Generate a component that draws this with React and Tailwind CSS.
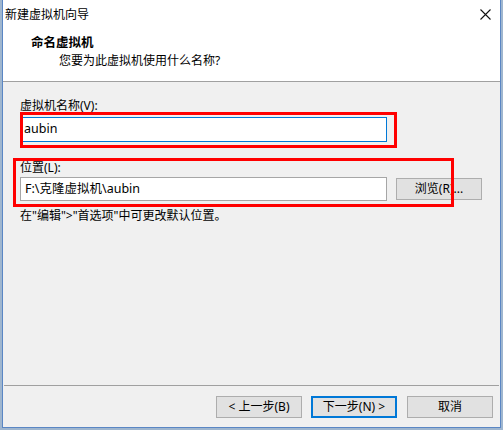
import React from "react";

export default function App() {
  const font = "font-['Noto_Sans','Noto_Sans_CJK_SC',sans-serif]";
  return (
    <div className={`relative w-[503px] h-[430px] bg-[#9fb6cf] overflow-hidden text-[12px] text-black ${font}`}>
      <div className="ml-[2px] w-[499px] h-[428px] flex flex-col border-x border-b border-[#5a86c4] bg-[#f0f0f0]">
        {/* Title bar */}
        <div className="h-[28px] shrink-0 bg-white flex items-center justify-between pl-[2px] pr-[8px]">
          <span className="leading-[15px] pt-[1px]">新建虚拟机向导</span>
          <svg width="11" height="11" viewBox="0 0 11 11" className="mr-[1px]">
            <path d="M0.5 0.5 L10.5 10.5 M10.5 0.5 L0.5 10.5" stroke="#111" strokeWidth="1.1" fill="none" />
          </svg>
        </div>
        {/* Header */}
        <div className="h-[53px] shrink-0 bg-white flex flex-col pl-[28px] pt-[6px]">
          <div className="font-bold text-[12.5px] leading-[17px]">命名虚拟机</div>
          <div className="pl-[28px] leading-[15px] mt-[2px]">您要为此虚拟机使用什么名称?</div>
        </div>
        <div className="h-px shrink-0 bg-[#a0a0a0]" />
        {/* Content */}
        <div className="flex-1 flex flex-col pl-[17px] pt-[16px]">
          <div className="leading-[15px]">虚拟机名称(V):</div>
          <div className="mt-[4px] w-[367px] h-[25px] border border-[#0078d7] bg-white flex items-center pl-[3px] text-[12.5px]">
            aubin
          </div>
          <div className="mt-[18px] leading-[15px]">位置(L):</div>
          <div className="mt-[2px] flex items-center gap-[9px]">
            <div className="w-[367px] h-[24px] border border-[#a6a6a6] bg-white flex items-center pl-[4px] text-[12.5px]">
              F:\克隆虚拟机\aubin
            </div>
            <div className="w-[86px] h-[22px] border border-[#adadad] bg-[#e1e1e1] flex items-center justify-center">
              浏览(R)...
            </div>
          </div>
          <div className="mt-[7px] leading-[15px]">在"编辑"&gt;"首选项"中可更改默认位置。</div>
          <div className="flex-1" />
          <div className="h-px bg-[#a0a0a0] mr-[1px] -ml-[16px]" />
          <div className="flex justify-end gap-[9px] pt-[10px] pb-[9px] pr-[7px]">
            <div className="w-[86px] h-[22px] border border-[#adadad] bg-[#e1e1e1] flex items-center justify-center">
              &lt; 上一步(B)
            </div>
            <div className="w-[86px] h-[22px] border-2 border-[#0078d7] bg-[#e1e1e1] flex items-center justify-center">
              下一步(N) &gt;
            </div>
            <div className="w-[86px] h-[22px] border border-[#adadad] bg-[#e1e1e1] flex items-center justify-center ml-px">
              取消
            </div>
          </div>
        </div>
      </div>
      {/* Red annotation boxes */}
      <div className="absolute left-[20px] top-[112px] w-[377px] h-[36px] border-[3px] border-[#f00]" />
      <div className="absolute left-[13px] top-[158px] w-[441px] h-[49px] border-[3px] border-[#f00]" />
    </div>
  );
}
